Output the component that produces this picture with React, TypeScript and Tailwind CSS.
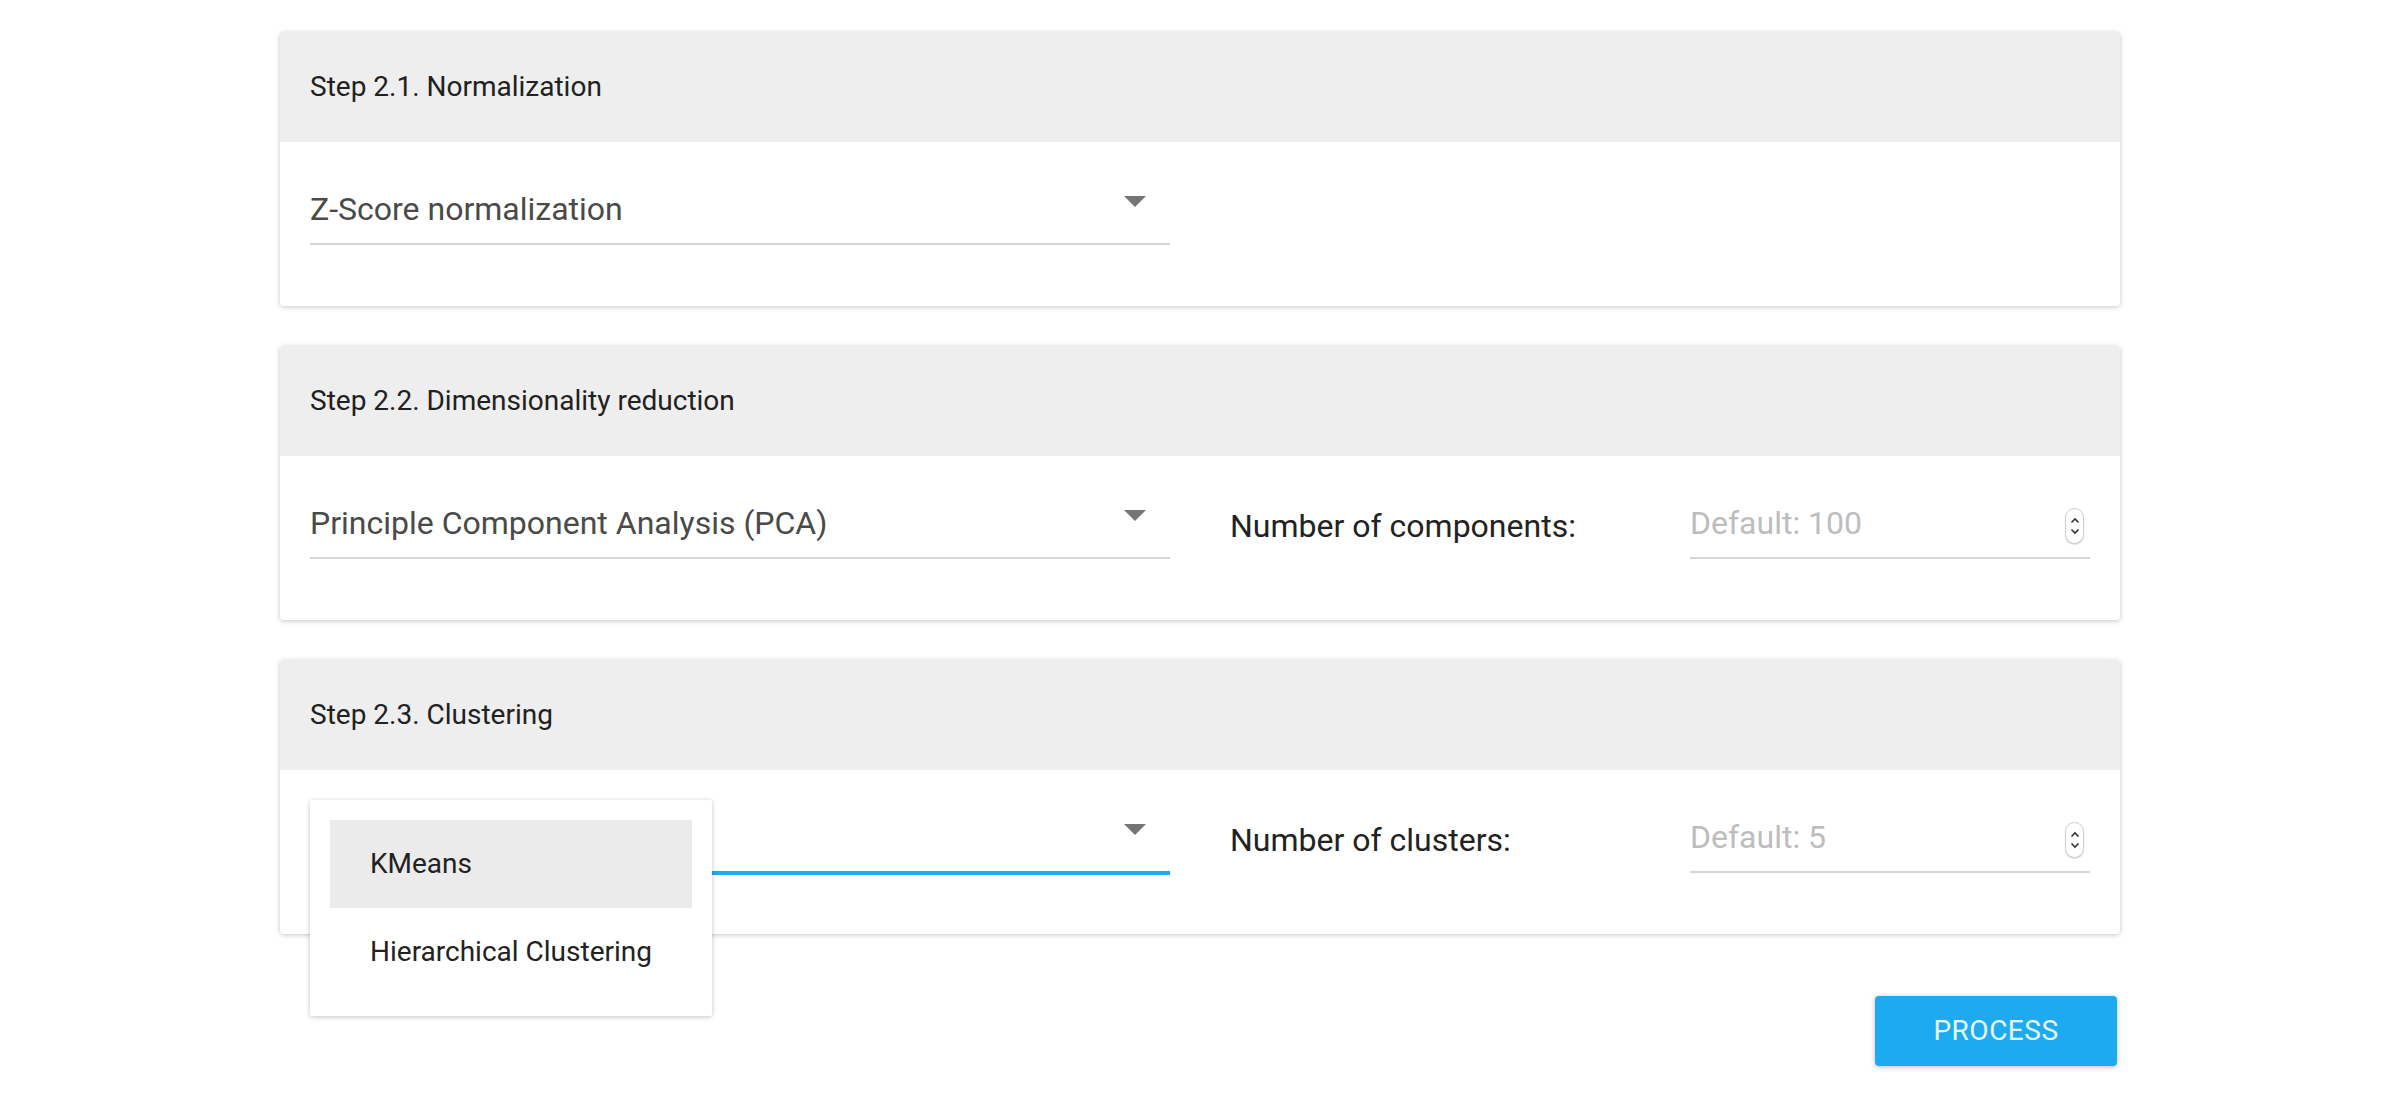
import React from 'react';

const font = { fontFamily: 'Roboto, "Noto Sans", sans-serif' };

function Arrow() {
  return (
    <svg width="22" height="11" viewBox="0 0 22 11" className="mt-[11px] mr-[24px] shrink-0">
      <polygon points="0,0 22,0 11,11" fill="#757575" />
    </svg>
  );
}

function Spinner() {
  return (
    <div className="mt-[9px] mr-[6px] w-[19px] h-[36px] rounded-full border border-[#cfcfcf] bg-white shadow-[0_1px_1px_rgba(0,0,0,0.15)] flex flex-col items-center justify-center gap-[4px]">
      <svg width="10" height="7" viewBox="0 0 10 7">
        <path d="M1.5 5.5 L5 2 L8.5 5.5" stroke="#333" strokeWidth="1.6" fill="none" />
      </svg>
      <svg width="10" height="7" viewBox="0 0 10 7">
        <path d="M1.5 1.5 L5 5 L8.5 1.5" stroke="#333" strokeWidth="1.6" fill="none" />
      </svg>
    </div>
  );
}

function Card({ title, children, bodyPb = 'pb-[61px]' }: { title: string; children: React.ReactNode; bodyPb?: string }) {
  return (
    <div className="w-full bg-white rounded-[4px] shadow-[0_1px_6px_rgba(0,0,0,0.12),0_1px_4px_rgba(0,0,0,0.12)]">
      <div className="h-[110px] bg-[#eeeeee] rounded-t-[4px] px-[30px] flex items-center">
        <span className="text-[28px] text-[#212121]">{title}</span>
      </div>
      <div className={`px-[30px] pt-[43px] ${bodyPb}`}>{children}</div>
    </div>
  );
}

function SelectField({ value, focused }: { value?: string; focused?: boolean }) {
  return (
    <div
      className={`w-[860px] shrink-0 flex justify-between items-start pb-[10px] ${
        focused ? 'border-b-4 border-[#1ea9f0]' : 'border-b-2 border-[#d6d6d6]'
      }`}
    >
      <span className="block min-h-[48px] text-[32px] leading-[48px] text-[#4a4a4a]">{value ?? ''}</span>
      <Arrow />
    </div>
  );
}

function NumberField({ label, placeholder }: { label: string; placeholder: string }) {
  return (
    <>
      <div className="ml-[60px] w-[460px] shrink-0 pt-[3px] text-[32px] leading-[48px] text-[#222222]">{label}</div>
      <div className="flex-1 flex justify-between items-start pb-[10px] border-b-2 border-[#d6d6d6]">
        <span className="text-[32px] leading-[48px] text-[#bdbdbd]">{placeholder}</span>
        <Spinner />
      </div>
    </>
  );
}

export default function App() {
  return (
    <div className="min-h-screen bg-white" style={font}>
      <div className="w-[1840px] mx-auto pt-[32px] flex flex-col gap-[40px]">
        <Card title="Step 2.1. Normalization">
          <div className="flex items-start">
            <SelectField value="Z-Score normalization" />
          </div>
        </Card>

        <Card title="Step 2.2. Dimensionality reduction">
          <div className="flex items-start">
            <SelectField value="Principle Component Analysis (PCA)" />
            <NumberField label="Number of components:" placeholder="Default: 100" />
          </div>
        </Card>

        <Card title="Step 2.3. Clustering" bodyPb="pb-[59px]">
          <div className="flex items-start">
            <div className="relative">
              <SelectField focused />
              {/* open dropdown menu */}
              <div className="absolute left-0 top-[-13px] z-10 w-[402px] bg-white rounded-[2px] pt-[20px] pb-[20px] px-[20px] shadow-[0_1px_6px_rgba(0,0,0,0.12),0_1px_4px_rgba(0,0,0,0.12)]">
                <div className="h-[88px] bg-[#ebebeb] pl-[40px] flex items-center text-[28px] text-[#222222]">KMeans</div>
                <div className="h-[88px] pl-[40px] flex items-center text-[28px] text-[#222222]">Hierarchical Clustering</div>
              </div>
            </div>
            <NumberField label="Number of clusters:" placeholder="Default: 5" />
          </div>
        </Card>

        <div className="flex justify-end pr-[3px] mt-[22px]">
          <button className="w-[242px] h-[70px] rounded-[4px] bg-[#1eaaf1] text-[28px] tracking-[0.5px] text-[#e8f7fe] shadow-[0_1px_6px_rgba(0,0,0,0.12),0_1px_4px_rgba(0,0,0,0.16)]">
            PROCESS
          </button>
        </div>
      </div>
    </div>
  );
}
